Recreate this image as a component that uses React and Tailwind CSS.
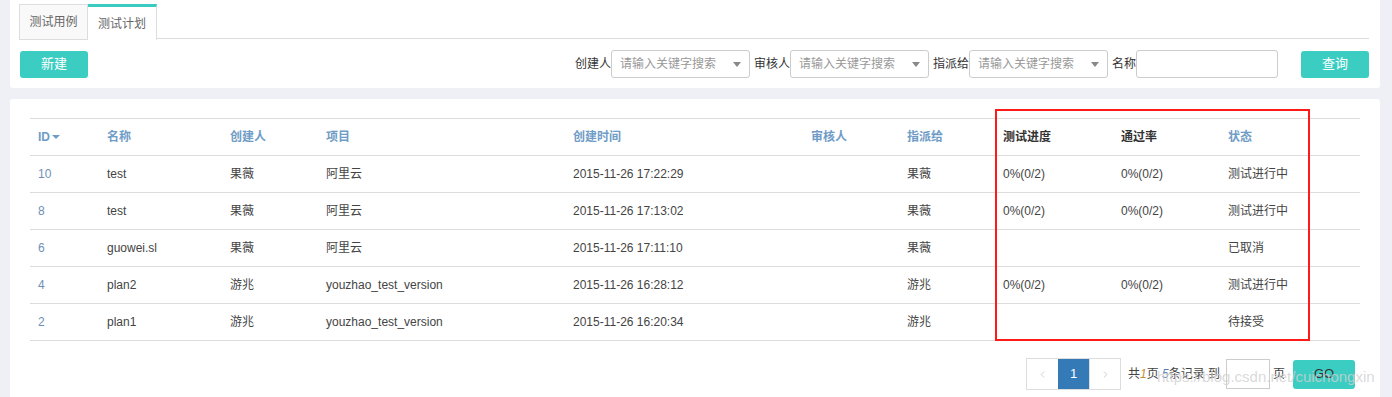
import { ChevronLeft, ChevronRight } from "lucide-react";

const font = { fontFamily: '"Liberation Sans", "Noto Sans CJK SC", sans-serif' };

const cols = [
  { key: "id", label: "ID", w: "w-[69px]" },
  { key: "name", label: "名称", w: "w-[123px]" },
  { key: "creator", label: "创建人", w: "w-[96px]" },
  { key: "project", label: "项目", w: "w-[247px]" },
  { key: "time", label: "创建时间", w: "w-[238px]" },
  { key: "reviewer", label: "审核人", w: "w-[96px]" },
  { key: "assignee", label: "指派给", w: "w-[96px]" },
  { key: "progress", label: "测试进度", w: "w-[118px]", dark: true },
  { key: "pass", label: "通过率", w: "w-[107px]", dark: true },
  { key: "status", label: "状态", w: "w-[140px]" },
];

const rows = [
  { id: 10, name: "test", creator: "果薇", project: "阿里云", time: "2015-11-26 17:22:29", reviewer: "", assignee: "果薇", progress: "0%(0/2)", pass: "0%(0/2)", status: "测试进行中" },
  { id: 8, name: "test", creator: "果薇", project: "阿里云", time: "2015-11-26 17:13:02", reviewer: "", assignee: "果薇", progress: "0%(0/2)", pass: "0%(0/2)", status: "测试进行中" },
  { id: 6, name: "guowei.sl", creator: "果薇", project: "阿里云", time: "2015-11-26 17:11:10", reviewer: "", assignee: "果薇", progress: "", pass: "", status: "已取消" },
  { id: 4, name: "plan2", creator: "游兆", project: "youzhao_test_version", time: "2015-11-26 16:28:12", reviewer: "", assignee: "游兆", progress: "0%(0/2)", pass: "0%(0/2)", status: "测试进行中" },
  { id: 2, name: "plan1", creator: "游兆", project: "youzhao_test_version", time: "2015-11-26 16:20:34", reviewer: "", assignee: "游兆", progress: "", pass: "", status: "待接受" },
];

const SearchSelect = () => (
  <div className="flex items-center justify-between w-[139px] h-[28px] border border-[#cccccc] rounded-[3px] bg-white pl-[8px] pr-[8px]">
    <span className="text-[12px] text-[#999999]">请输入关键字搜索</span>
    <span className="w-0 h-0 border-l-[4px] border-r-[4px] border-t-[5px] border-l-transparent border-r-transparent border-t-[#888888]" />
  </div>
);

export default function App() {
  return (
    <div className="w-[1392px] h-[397px] overflow-hidden bg-[#eff0f5] pl-[10px] text-[#333333]" style={font}>
      {/* filter panel */}
      <div className="w-[1370px] bg-white rounded-b-[3px] pt-[4px] pl-[9px] pr-[11px] pb-[10px]">
        <div className="flex border-b border-[#dddddd] h-[35px]">
          <div className="w-[69px] h-[36px] flex items-center justify-center border border-[#dddddd] bg-[#f9f9f9] text-[12px] text-[#666666]">
            测试用例
          </div>
          <div className="w-[69px] h-[36px] flex items-center justify-center border-t-[3px] border-t-[#39cbbf] border-r border-r-[#dddddd] bg-white text-[12px] text-[#666666]">
            测试计划
          </div>
        </div>
        <div className="flex items-center mt-[11px] pl-[1px] h-[28px]">
          <button className="w-[68px] h-[27px] rounded-[3px] bg-[#3bcdc2] text-white text-[13px]">新建</button>
          <div className="ml-auto flex items-center text-[12px] text-[#333333]">
            <span>创建人</span>
            <SearchSelect />
            <span className="ml-[4px]">审核人</span>
            <SearchSelect />
            <span className="ml-[4px]">指派给</span>
            <SearchSelect />
            <span className="ml-[4px]">名称</span>
            <div className="w-[142px] h-[28px] border border-[#cccccc] rounded-[3px] bg-white" />
            <button className="ml-[23px] w-[68px] h-[27px] rounded-[3px] bg-[#3bcdc2] text-white text-[13px]">查询</button>
          </div>
        </div>
      </div>

      {/* table panel */}
      <div className="relative w-[1370px] h-[320px] mt-[11px] bg-white rounded-t-[3px] pt-[19px] px-[20px]">
        <table className="border-collapse text-[12px]">
          <thead>
            <tr className="h-[37px] border-t border-b border-[#dddddd]">
              {cols.map((c) => (
                <th
                  key={c.key}
                  className={`${c.w} pl-[8px] text-left font-bold ${c.dark ? "text-[#333333]" : "text-[#6f9cc6]"}`}
                >
                  {c.key === "id" ? (
                    <span className="inline-flex items-center gap-[2px]">
                      ID
                      <span className="w-0 h-0 border-l-[4px] border-r-[4px] border-t-[4px] border-l-transparent border-r-transparent border-t-[#6f9cc6]" />
                    </span>
                  ) : (
                    c.label
                  )}
                </th>
              ))}
            </tr>
          </thead>
          <tbody>
            {rows.map((r) => (
              <tr key={r.id} className="h-[37px] border-b border-[#dddddd]">
                {cols.map((c) => (
                  <td key={c.key} className={`pl-[8px] ${c.key === "id" ? "text-[#6f8fb8]" : "text-[#444444]"}`}>
                    {r[c.key]}
                  </td>
                ))}
              </tr>
            ))}
          </tbody>
        </table>

        {/* pagination */}
        <div className="flex items-center mt-[17px] ml-[996px] text-[12px] text-[#444444]">
          <div className="flex h-[32px] border border-[#dddddd]">
            <span className="w-[31px] flex items-center justify-center text-[#bbbbbb]">
              <ChevronLeft size={11} strokeWidth={1.5} />
            </span>
            <span className="w-[31px] flex items-center justify-center bg-[#337ab7] text-white text-[13px]">1</span>
            <span className="w-[31px] flex items-center justify-center text-[#bbbbbb] border-l border-[#dddddd]">
              <ChevronRight size={11} strokeWidth={1.5} />
            </span>
          </div>
          <span className="ml-[7px]">
            共<i className="text-[#c98a3a]">1</i>页 <i className="text-[#5b7fb0]">5</i>条记录 到
          </span>
          <div className="ml-[6px] w-[44px] h-[30px] border border-[#cccccc] bg-white" />
          <span className="ml-[3px]">页</span>
          <button className="ml-[8px] w-[62px] h-[29px] rounded-[3px] bg-[#3bcdc2] text-[#333333] text-[13px]">GO</button>
        </div>

        {/* annotation overlay */}
        <div className="absolute left-[985px] top-[10px] w-[315px] h-[232px] border-2 border-[#ff1a1a]" />
        <span className="absolute left-[1147px] top-[267px] text-[15px] text-[#d0d0d0]/80 whitespace-nowrap">
          https://blog.csdn.net/cuichongxin
        </span>
      </div>
    </div>
  );
}
